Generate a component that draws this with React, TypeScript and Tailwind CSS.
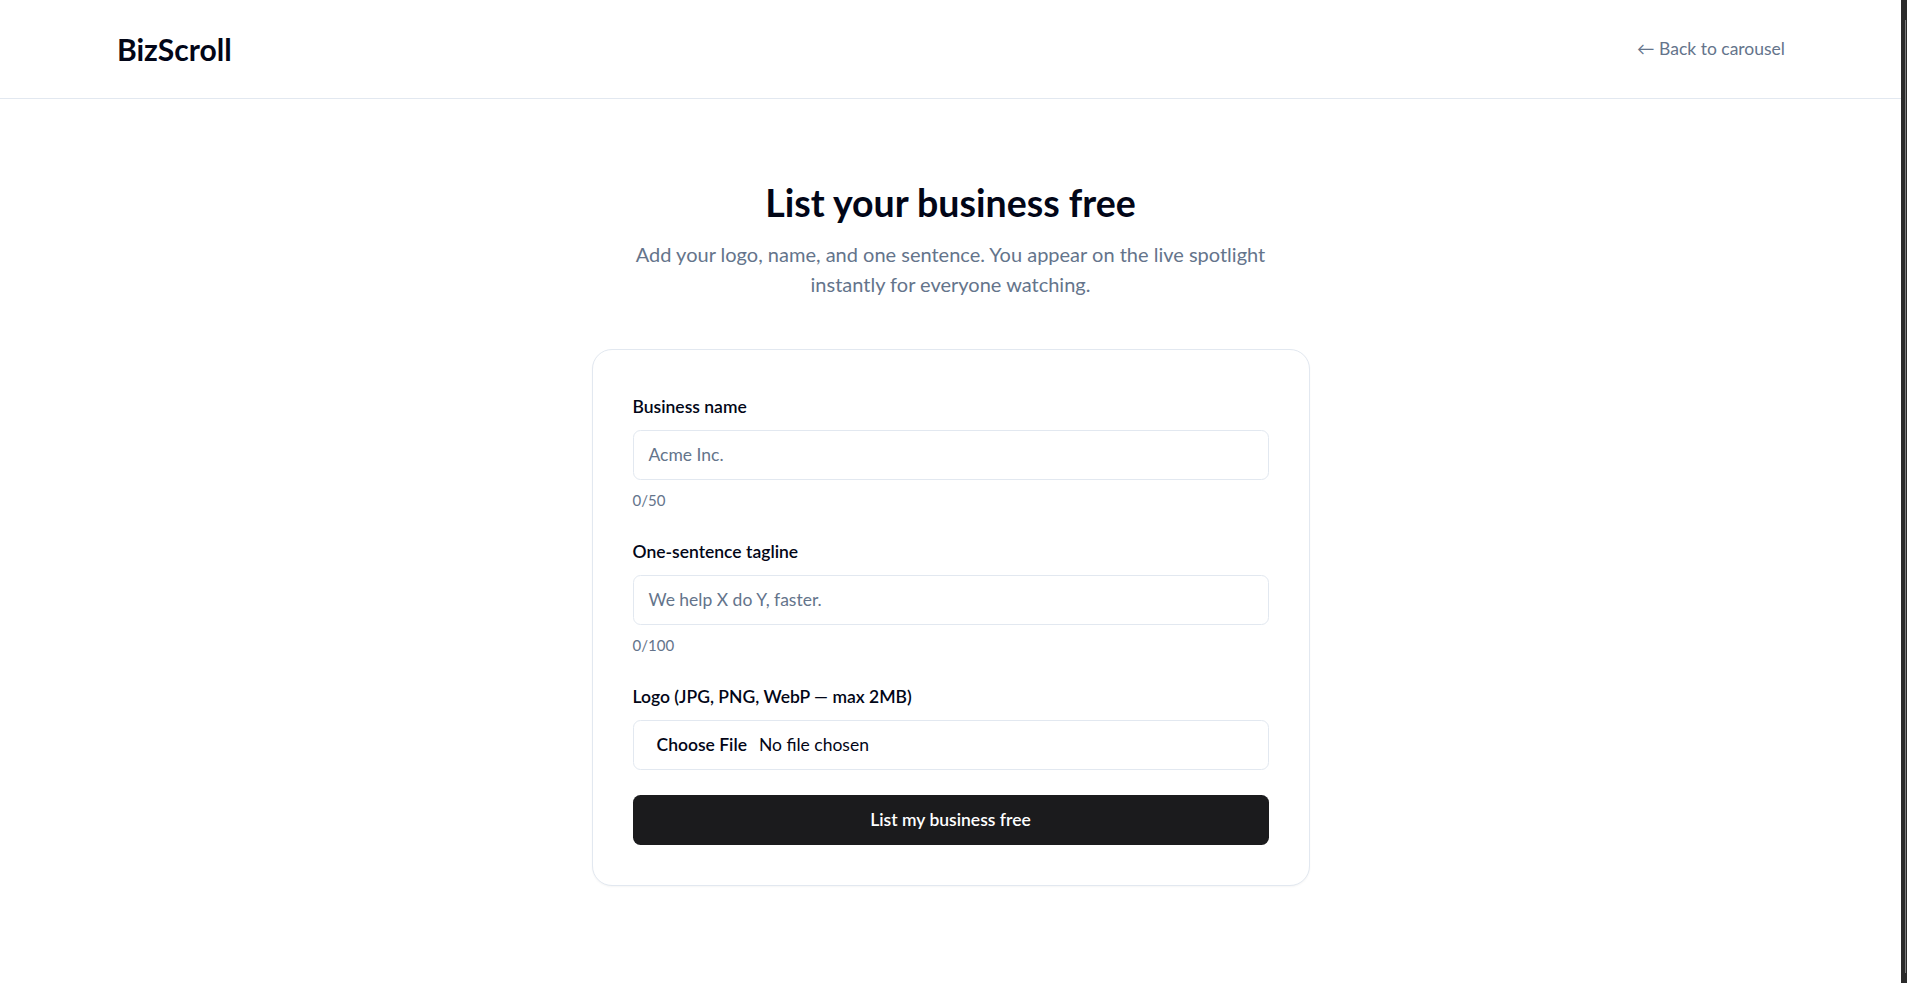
import React from "react";

const FONT = "font-['Lato',sans-serif]";

function Field({
  label,
  placeholder,
  counter,
  first,
}: {
  label: string;
  placeholder: string;
  counter: string;
  first?: boolean;
}) {
  return (
    <div className={`flex flex-col ${first ? "" : "mt-[29px]"}`}>
      <label className="text-[17.5px] leading-[25px] font-semibold text-[#020617]">{label}</label>
      <div className="mt-[11px] h-[50px] rounded-[7.5px] border border-[#e2e8f0] bg-white px-[15px] flex items-center text-[17.5px] text-[#64748b]">
        {placeholder}
      </div>
      <div className="mt-[10px] text-[15px] leading-[20px] text-[#64748b]">{counter}</div>
    </div>
  );
}

export default function App() {
  return (
    <div className={`min-h-screen bg-white flex ${FONT}`}>
      <div className="flex-1 flex flex-col">
        <header className="h-[99px] border-b border-[#e2e8f0] flex items-center justify-between pl-[117px] pr-[116px]">
          <span className="text-[30px] leading-[40px] font-bold text-[#020617]">BizScroll</span>
          <a className="text-[17.5px] text-[#64748b]">← Back to carousel</a>
        </header>
        <main className="flex flex-col items-center pt-[81px]">
          <h1 className="text-[37.5px] leading-[45px] font-bold text-[#020617]">List your business free</h1>
          <p className="mt-[14px] w-[660px] text-center text-[20px] leading-[30px] text-[#64748b]">
            Add your logo, name, and one sentence. You appear on the live spotlight instantly for everyone watching.
          </p>
          <div className="mt-[50px] w-[718px] rounded-[20px] border border-[#e2e8f0] bg-white px-[40px] pt-[44px] pb-[40px] shadow-[0_1px_2px_rgba(0,0,0,0.04)] flex flex-col">
            <Field first label="Business name" placeholder="Acme Inc." counter="0/50" />
            <Field label="One-sentence tagline" placeholder="We help X do Y, faster." counter="0/100" />
            <div className="mt-[29px] flex flex-col">
              <label className="text-[17.5px] leading-[25px] font-semibold text-[#020617]">
                Logo (JPG, PNG, WebP — max 2MB)
              </label>
              <div className="mt-[11px] h-[50px] rounded-[7.5px] border border-[#e2e8f0] bg-white pl-[23px] flex items-center text-[17.5px] text-[#020617]">
                <span className="font-semibold">Choose File</span>
                <span className="ml-[12px]">No file chosen</span>
              </div>
            </div>
            <button className="mt-[25px] h-[50px] rounded-[7.5px] bg-[#1b1b1d] text-white text-[17.5px] font-semibold">
              List my business free
            </button>
          </div>
        </main>
      </div>
      <div className="w-[6px] bg-[#2b2b2b] flex justify-end pr-[1px]">
        <div className="w-[1px] mt-[20px] mb-[10px] bg-[#7a7a7a]" />
      </div>
    </div>
  );
}
